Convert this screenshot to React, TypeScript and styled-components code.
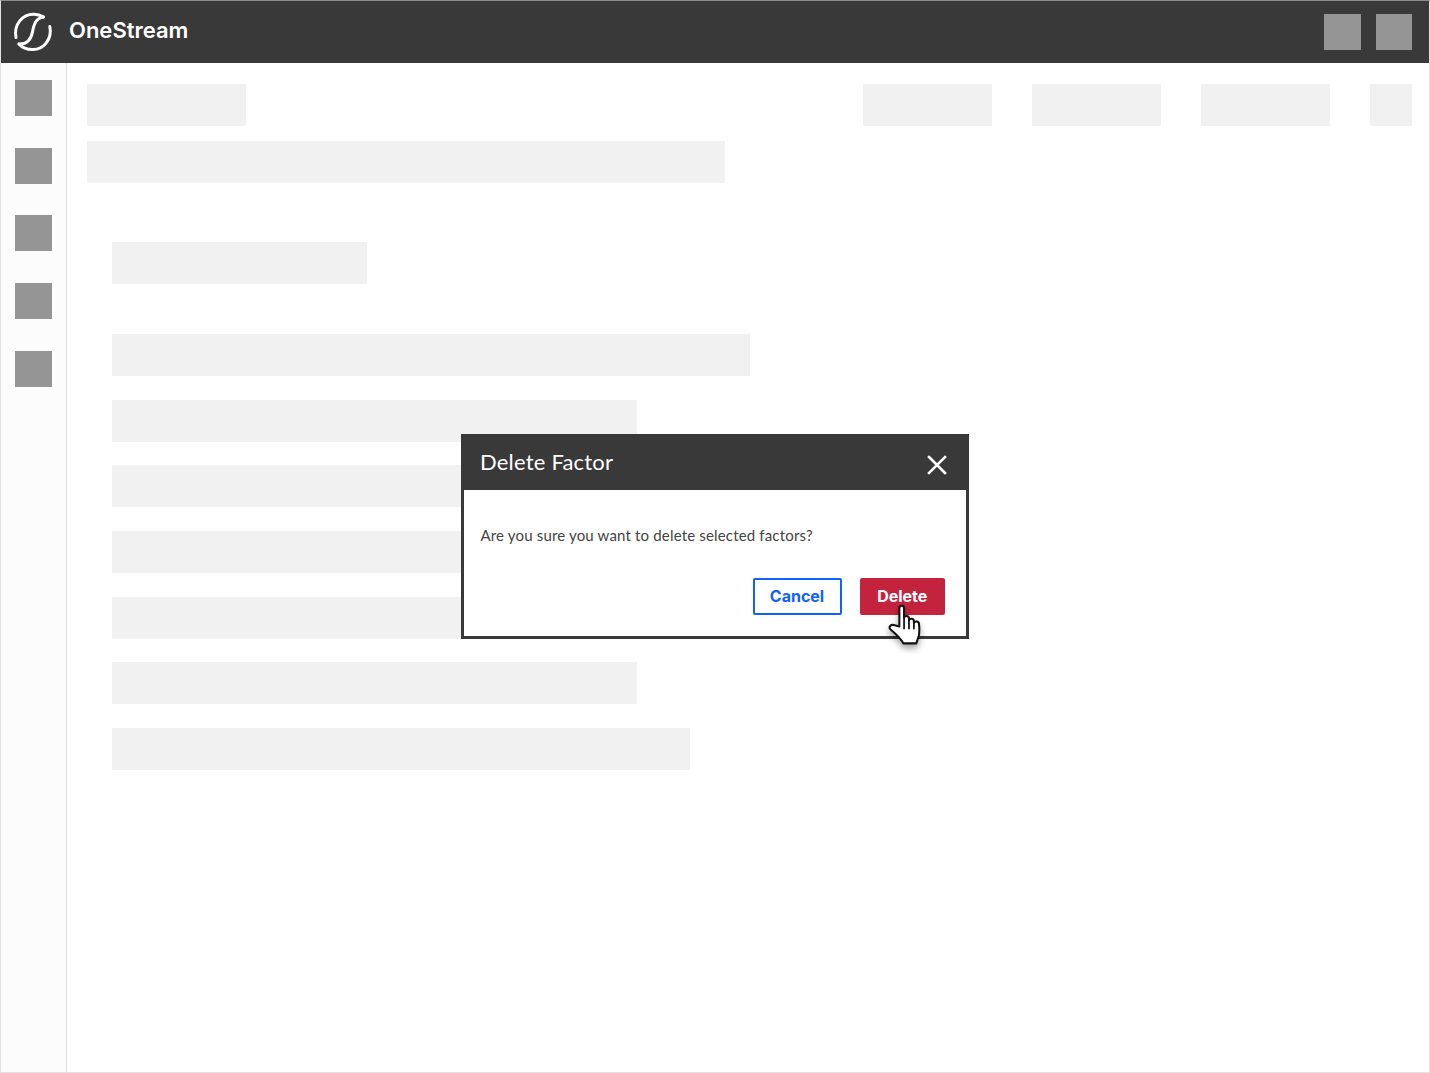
import React from 'react'
import styled, { createGlobalStyle } from 'styled-components'

const RAIL_ITEMS = [0, 1, 2, 3, 4]
const TOP_ACTIONS = [129, 129, 129, 42]
const ROW_WIDTHS = [638, 525, 525, 525, 525, 525, 578]

const GlobalStyle = createGlobalStyle`
  html, body {
    margin: 0;
    padding: 0;
    background: #fff;
    font-family: 'Liberation Sans', Arial, sans-serif;
  }
`

const Logo: React.FC = () => (
  <LogoSvg viewBox="0 0 38 38" fill="none" stroke="#fff" strokeWidth="3" strokeLinecap="round">
    <path d="M2 24.5 C-0.5 11 9 0.8 20 1.2 C23.5 1.3 26.5 2.2 29.5 4" />
    <path d="M29.5 4 C22 5 20 11 18.6 18.5 C17 27 13 31.5 5 31" />
    <path d="M35.8 13.5 C38.5 26 29.5 37 18.5 36.6 C13 36.5 8 34.5 5 31" />
  </LogoSvg>
)

const HandCursor: React.FC = () => (
  <HandSvg viewBox="0 0 33 42" strokeLinejoin="round" strokeLinecap="round">
    <path
      d="M10 21 L10 3 C10 0 14.6 0 14.6 3 L14.6 12.5 C15.2 10.2 19.2 10.2 19.4 13 L19.4 15 C20 12.8 24 12.8 24.2 15.6 L24.2 17.4 C25 15.4 29 15.6 29.2 18.4 C29.6 22 29.6 27 29 30 L26.6 37.5 L14 37.5 C12 34 8 29.5 1.4 24 C-1 21.5 2 18 5.5 19.8 Z"
      fill="#fff"
      stroke="#111"
      strokeWidth="2"
    />
    <path d="M14.6 12.5 L14.6 23 M19.4 14.5 L19.4 23 M24.2 17 L24.2 23" fill="none" stroke="#111" strokeWidth="1.7" />
  </HandSvg>
)

const App: React.FC = () => (
  <>
    <GlobalStyle />
    <Page>
      <TopBar>
        <Brand>
          <Logo />
          <BrandName>OneStream</BrandName>
        </Brand>
        <TopBarTools>
          <GreySquare />
          <GreySquare />
        </TopBarTools>
      </TopBar>
      <Body>
        <Rail>
          {RAIL_ITEMS.map((item) => (
            <GreySquare key={item} />
          ))}
        </Rail>
        <Main>
          <TitleRow>
            <Skeleton $width={159.5} />
            <Actions>
              {TOP_ACTIONS.map((width, i) => (
                <Skeleton key={i} $width={width} />
              ))}
            </Actions>
          </TitleRow>
          <Skeleton $width={638.5} />
          <Section>
            <SectionHeading $width={255} />
            <Rows>
              {ROW_WIDTHS.map((width, i) => (
                <Skeleton key={i} $width={width} />
              ))}
            </Rows>
          </Section>
        </Main>
      </Body>
      <Dialog>
        <DialogHeader>
          <DialogTitle>Delete Factor</DialogTitle>
          <CloseIcon viewBox="0 0 20 20" stroke="#fff" strokeWidth="2.6" strokeLinecap="square">
            <path d="M2 2 L18 18 M18 2 L2 18" />
          </CloseIcon>
        </DialogHeader>
        <DialogBody>
          <DialogText>Are you sure you want to delete selected factors?</DialogText>
          <DialogActions>
            <CancelButton>Cancel</CancelButton>
            <DeleteButton>Delete</DeleteButton>
          </DialogActions>
        </DialogBody>
        <HandCursor />
      </Dialog>
    </Page>
  </>
)

const Page = styled.div`
  position: relative;
  box-sizing: border-box;
  width: 1430px;
  height: 1073px;
  display: flex;
  flex-direction: column;
  border: 1px solid #e2e2e2;
  border-top-color: #8a8a8a;
  background: #fff;
  overflow: hidden;
`

const TopBar = styled.header`
  flex: none;
  height: 62px;
  display: flex;
  align-items: center;
  justify-content: space-between;
  padding: 0 17px 0 13px;
  background: #393939;
`

const Brand = styled.div`
  display: flex;
  align-items: center;
  gap: 17px;
`

const LogoSvg = styled.svg`
  width: 38px;
  height: 38px;
  overflow: visible;
`

const BrandName = styled.span`
  font-family: Inter, 'Liberation Sans', sans-serif;
  font-size: 22px;
  font-weight: 600;
  color: #fff;
  position: relative;
  top: -2px;
`

const TopBarTools = styled.div`
  display: flex;
  gap: 15px;
`

const GreySquare = styled.div`
  width: 36.5px;
  height: 36px;
  background: #959595;
`

const Body = styled.div`
  flex: 1;
  display: flex;
  min-height: 0;
`

const Rail = styled.nav`
  flex: none;
  box-sizing: border-box;
  width: 66px;
  display: flex;
  flex-direction: column;
  align-items: center;
  gap: 31.7px;
  padding-top: 17px;
  background: #fcfcfc;
  border-right: 1.5px solid #dedede;
`

const Main = styled.main`
  flex: 1;
  display: flex;
  flex-direction: column;
  gap: 15px;
  padding: 21px 17px 0 19.5px;
`

const TitleRow = styled.div`
  display: flex;
  justify-content: space-between;
`

const Actions = styled.div`
  display: flex;
  gap: 40px;
`

const Skeleton = styled.div<{ $width: number }>`
  flex: none;
  width: ${(props) => props.$width}px;
  height: 42px;
  background: #f1f1f1;
`

const Section = styled.section`
  display: flex;
  flex-direction: column;
  padding: 44px 0 0 25.5px;
`

const SectionHeading = styled(Skeleton)`
  margin-bottom: 50px;
`

const Rows = styled.div`
  display: flex;
  flex-direction: column;
  gap: 23.7px;
`

const Dialog = styled.div`
  position: absolute;
  left: 460px;
  top: 433px;
  box-sizing: border-box;
  width: 508px;
  height: 204.5px;
  display: flex;
  flex-direction: column;
  border: 3px solid #393939;
  border-top: 0;
  background: #fff;
`

const DialogHeader = styled.div`
  flex: none;
  height: 56px;
  margin: 0 -1px;
  display: flex;
  align-items: center;
  justify-content: space-between;
  padding: 0 20px 0 17px;
  background: #393939;
`

const DialogTitle = styled.h2`
  margin: 0 0 2px;
  font-family: Lato, 'Open Sans', sans-serif;
  font-size: 22px;
  font-weight: 400;
  letter-spacing: 0.2px;
  color: #fff;
`

const CloseIcon = styled.svg`
  width: 20px;
  height: 20px;
  margin-top: 5px;
`

const DialogBody = styled.div`
  flex: 1;
  display: flex;
  flex-direction: column;
  justify-content: space-between;
  padding: 36px 21px 20.5px 16.5px;
`

const DialogText = styled.p`
  margin: 0;
  font-family: Lato, 'Open Sans', sans-serif;
  font-size: 15px;
  line-height: 19px;
  letter-spacing: 0.17px;
  color: #444;
`

const DialogActions = styled.div`
  display: flex;
  justify-content: flex-end;
  gap: 18px;
`

const ActionButton = styled.button`
  box-sizing: border-box;
  height: 37px;
  padding: 0 0 2px;
  border-radius: 2px;
  font-family: Inter, 'Liberation Sans', sans-serif;
  font-size: 16px;
  font-weight: 700;
`

const CancelButton = styled(ActionButton)`
  width: 89px;
  border: 2px solid #0f62fe;
  background: #fff;
  color: #0f62fe;
`

const DeleteButton = styled(ActionButton)`
  width: 85.5px;
  border: 0;
  background: #c4233d;
  color: #fff;
`

const HandSvg = styled.svg`
  position: absolute;
  left: 425px;
  top: 171px;
  width: 34px;
  height: 43px;
  overflow: visible;
  filter: drop-shadow(0 4px 3px rgba(0, 0, 0, 0.35));
`

export default App
